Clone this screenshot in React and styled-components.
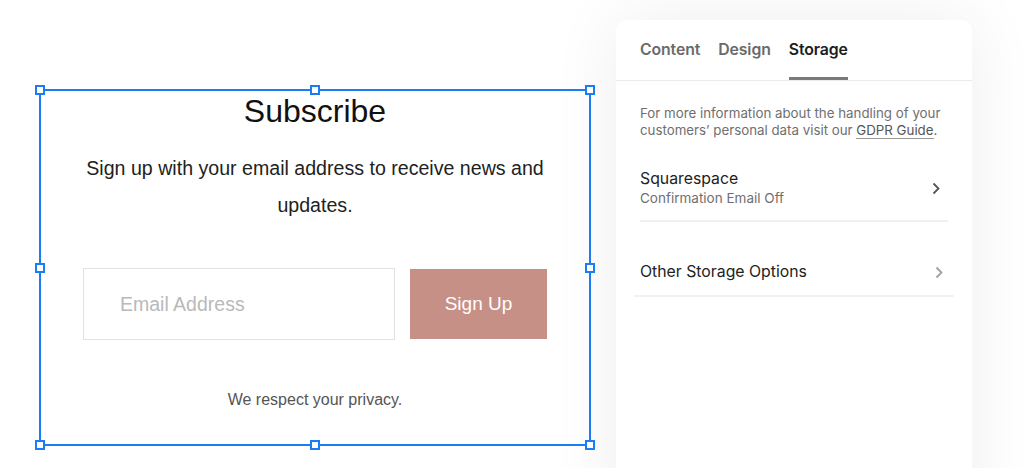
import React from "react";
import styled, { createGlobalStyle } from "styled-components";

const GlobalStyle = createGlobalStyle`
  html, body {
    margin: 0;
    padding: 0;
    background: #ffffff;
  }
  body {
    width: 1024px;
    height: 468px;
    overflow: hidden;
  }
`;

const Page = styled.div`
  display: flex;
  flex-direction: row;
  align-items: flex-start;
  height: 468px;
  overflow: hidden;
`;

const Canvas = styled.div`
  width: 616px;
  padding: 89px 0 0 39px;
  box-sizing: border-box;
`;

const Block = styled.div`
  position: relative;
  width: 552px;
  height: 357px;
  box-sizing: border-box;
  border: 2px solid #1a7df6;
  padding: 1px 40px 0;
  display: flex;
  flex-direction: column;
  align-items: center;
  font-family: "Liberation Sans", Arial, sans-serif;
`;

const HandleFrame = styled.div`
  position: absolute;
  inset: -1px;
  pointer-events: none;
`;

const Handle = styled.span`
  position: absolute;
  width: 6px;
  height: 6px;
  background: #ffffff;
  border: 2px solid #1a7df6;
  left: ${(p) => p.$x};
  top: ${(p) => p.$y};
  transform: translate(-50%, -50%);
`;

const Title = styled.h2`
  margin: 0;
  font-size: 32px;
  font-weight: 400;
  line-height: 38px;
  color: #111111;
`;

const Description = styled.p`
  margin: 20px 0 0;
  font-size: 19.6px;
  line-height: 36.5px;
  color: #222222;
  text-align: center;
`;

const Form = styled.div`
  display: flex;
  flex-direction: row;
  align-items: center;
  gap: 15px;
  margin-top: 45px;
`;

const EmailInput = styled.div`
  width: 312px;
  height: 72px;
  box-sizing: border-box;
  border: 1px solid #e2e2e2;
  padding-left: 36px;
  display: flex;
  align-items: center;
  font-size: 19.5px;
  color: #b9b9b9;
`;

const Button = styled.div`
  width: 137px;
  height: 70px;
  background: #c69086;
  color: #ffffff;
  font-size: 19px;
  display: flex;
  align-items: center;
  justify-content: center;
`;

const Privacy = styled.p`
  margin: 48px 0 0;
  font-size: 16px;
  line-height: 24px;
  color: #555555;
`;

const Panel = styled.div`
  margin-top: 20px;
  width: 356px;
  height: 520px;
  background: #ffffff;
  border-radius: 10px;
  box-shadow: 0 0 70px rgba(0, 0, 0, 0.07);
  font-family: Inter, "Noto Sans", sans-serif;
`;

const Tabs = styled.div`
  display: flex;
  flex-direction: row;
  gap: 18px;
  padding: 0 24px;
  border-bottom: 1px solid #ebebeb;
`;

const Tab = styled.div`
  padding: 21px 0 18px;
  font-size: 15.8px;
  font-weight: 600;
  line-height: 18px;
  letter-spacing: -0.1px;
  color: ${(p) => (p.$active ? "#1c1c1c" : "#6a6a6a")};
  border-bottom: 3px solid ${(p) => (p.$active ? "#7a7a7a" : "transparent")};
`;

const Info = styled.p`
  margin: 0;
  padding: 24px 24px 0;
  font-size: 13.3px;
  line-height: 17px;
  color: #6f6f6f;
`;

const Link = styled.span`
  color: #555555;
  border-bottom: 1px solid #9a9a9a;
`;

const Row = styled.div`
  display: flex;
  flex-direction: row;
  align-items: center;
  justify-content: space-between;
  margin: 0 ${(p) => p.$inset}px;
  padding: ${(p) => p.$pad};
  border-bottom: 2px solid #f0f0f0;
`;

const RowText = styled.div`
  display: flex;
  flex-direction: column;
  padding-left: ${(p) => p.$indent || 0}px;
`;

const RowTitle = styled.div`
  font-size: 15.8px;
  line-height: 20px;
  color: #222222;
`;

const RowSub = styled.div`
  font-size: 13.5px;
  line-height: 18px;
  color: #6f6f6f;
`;

function Chevron({ color, offset }) {
  return (
    <svg
      width="8"
      height="13"
      viewBox="0 0 8 13"
      style={{ marginRight: offset }}
    >
      <polyline
        points="1.5,1.5 6.5,6.5 1.5,11.5"
        fill="none"
        stroke={color}
        strokeWidth="1.8"
      />
    </svg>
  );
}

const handles = [
  ["0%", "0%"],
  ["50%", "0%"],
  ["100%", "0%"],
  ["0%", "50%"],
  ["100%", "50%"],
  ["0%", "100%"],
  ["50%", "100%"],
  ["100%", "100%"],
];

export default function App() {
  return (
    <>
      <GlobalStyle />
      <Page>
        <Canvas>
          <Block>
            <Title>Subscribe</Title>
            <Description>
              Sign up with your email address to receive news and updates.
            </Description>
            <Form>
              <EmailInput>Email Address</EmailInput>
              <Button>Sign Up</Button>
            </Form>
            <Privacy>We respect your privacy.</Privacy>
            <HandleFrame>
              {handles.map(([x, y]) => (
                <Handle key={x + y} $x={x} $y={y} />
              ))}
            </HandleFrame>
          </Block>
        </Canvas>
        <Panel>
          <Tabs>
            <Tab>Content</Tab>
            <Tab>Design</Tab>
            <Tab $active>Storage</Tab>
          </Tabs>
          <Info>
            For more information about the handling of your customers’
            personal data visit our <Link>GDPR Guide</Link>.
          </Info>
          <Row $inset={24} $pad="30px 0 13px">
            <RowText>
              <RowTitle>Squarespace</RowTitle>
              <RowSub>Confirmation Email Off</RowSub>
            </RowText>
            <Chevron color="#555555" offset={8} />
          </Row>
          <Row $inset={18} $pad="40px 0 13px">
            <RowText $indent={6}>
              <RowTitle>Other Storage Options</RowTitle>
            </RowText>
            <Chevron color="#a0a0a0" offset={11} />
          </Row>
        </Panel>
      </Page>
    </>
  );
}
